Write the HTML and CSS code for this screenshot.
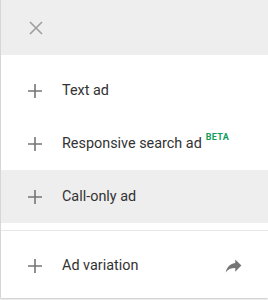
FILE: index.html
```html
<html>
  <head>
    <link rel="stylesheet" href="styles.css">
  </head>
  <body>
    <div class="panel">
      <div class="panel_head">
        <svg class="close_icon" width="14" height="14" viewBox="0 0 14 14">
          <path d="M1 1L13 13M13 1L1 13" stroke="#9e9e9e" stroke-width="1.6" fill="none"/>
        </svg>
      </div>
      <div class="menu">
        <div class="item">
          <svg class="plus_icon" width="14" height="14" viewBox="0 0 14 14"><path d="M7 0V14M0 7H14" stroke="#757575" stroke-width="1.6"/></svg>
          <span class="label">Text ad</span>
        </div>
        <div class="item">
          <svg class="plus_icon" width="14" height="14" viewBox="0 0 14 14"><path d="M7 0V14M0 7H14" stroke="#757575" stroke-width="1.6"/></svg>
          <span class="label">Responsive search ad</span><sup class="beta">BETA</sup>
        </div>
        <div class="item active">
          <svg class="plus_icon" width="14" height="14" viewBox="0 0 14 14"><path d="M7 0V14M0 7H14" stroke="#757575" stroke-width="1.6"/></svg>
          <span class="label">Call-only ad</span>
        </div>
      </div>
      <div class="menu bottom">
        <div class="item">
          <svg class="plus_icon" width="14" height="14" viewBox="0 0 14 14"><path d="M7 0V14M0 7H14" stroke="#757575" stroke-width="1.6"/></svg>
          <span class="label">Ad variation</span>
          <svg class="share_icon" width="21" height="21" viewBox="0 0 24 24"><path d="M14 9V5l7 7-7 7v-4.1c-5 0-8.5 1.6-11 5.1 1-5 4-10 11-11z" fill="#757575"/></svg>
        </div>
      </div>
    </div>
  </body>
</html>
```

FILE: styles.css
```css
body {
  margin: 0;
  background: #ffffff;
  font-family: Roboto, "Liberation Sans", Arial, sans-serif;
}

.panel {
  width: 267px;
  height: 298px;
  border-left: solid 1px #d6d6d6;
  background-color: #ffffff;
  box-shadow: 0 1px 2px rgba(0,0,0,0.25);
}

.panel_head {
  height: 55px;
  background-color: #eeeeee;
  display: flex;
  align-items: center;
  padding-left: 28px;
}

.menu {
  padding: 9px 0 7px 0;
}

.menu.bottom {
  border-top: solid 1px #e6e6e6;
  padding-top: 8px;
}

.item {
  height: 53px;
  display: flex;
  align-items: center;
  padding-left: 27px;
  padding-right: 24px;
}

.item.active {
  background-color: #eeeeee;
}

.plus_icon {
  flex: none;
  margin-right: 20px;
}

.label {
  font-size: 14.4px;
  color: #333333;
}

.beta {
  font-size: 9px;
  font-weight: bold;
  color: #0f9d58;
  margin-left: 4px;
  align-self: flex-start;
  margin-top: 15px;
  letter-spacing: 0.3px;
}

.share_icon {
  margin-left: auto;
}
```
